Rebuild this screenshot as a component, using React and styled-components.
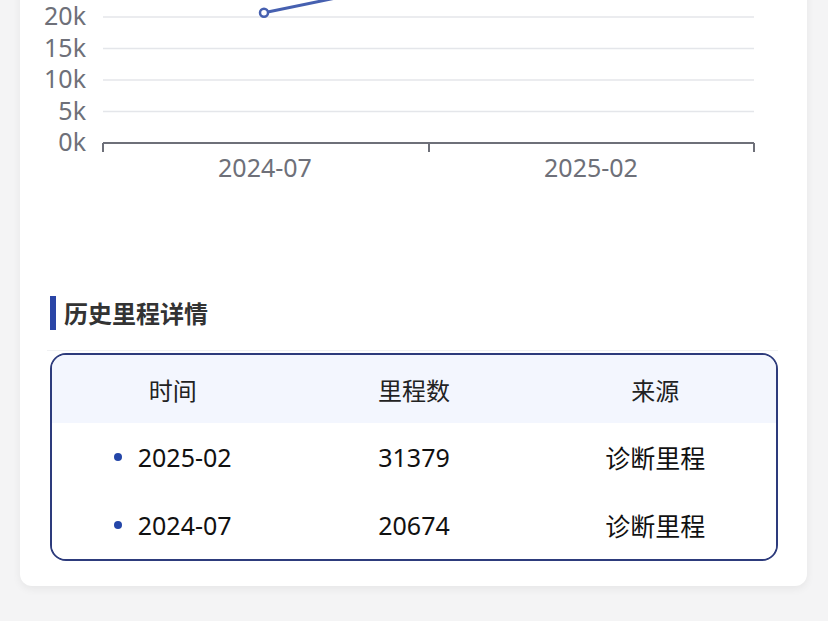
import React from "react";
import styled, { createGlobalStyle } from "styled-components";

const Global = createGlobalStyle`
  html, body { margin: 0; padding: 0; background: #f4f4f5; overflow: hidden; }
  body { font-family: "Noto Sans", "Noto Sans CJK SC", sans-serif; }
`;

const Page = styled.div`
  width: 828px;
  height: 621px;
  background: #f4f4f5;
  box-sizing: border-box;
  padding: 0 21px 0 20px;
`;

const Card = styled.div`
  margin-top: -20px;
  padding: 20px 0 25px;
  background: #fff;
  border-radius: 12px;
  box-shadow: 0 3px 8px rgba(0, 0, 0, 0.06);
`;

const ChartSvg = styled.svg`
  display: block;
  width: 787px;
  height: 270px;
  overflow: hidden;
`;

const Section = styled.div`
  padding: 0 29px 0 30px;
`;

const TitleRow = styled.div`
  margin-top: 26px;
  display: flex;
  align-items: center;
  gap: 8px;
  padding-bottom: 20px;
  border-bottom: 1px solid #f0f1f3;
  margin-left: -3px;
  padding-left: 3px;
`;

const TitleBar = styled.span`
  width: 6px;
  height: 34px;
  background: #2a45a6;
`;

const TitleText = styled.h2`
  margin: 0;
  font-size: 24px;
  line-height: 34px;
  font-weight: 700;
  color: #333;
  font-family: "Noto Sans CJK SC", sans-serif;
`;

const Table = styled.div`
  margin-top: 2px;
  border: 2px solid #2d3b7c;
  border-radius: 16px;
  overflow: hidden;
`;

const Row = styled.div`
  display: grid;
  grid-template-columns: 1fr 1fr 1fr;
  align-items: center;
  height: 68px;
  background: ${(p) => (p.$head ? "#f3f6fe" : "#fff")};
`;

const Cell = styled.div`
  display: flex;
  align-items: center;
  justify-content: center;
  gap: 16px;
  font-size: ${(p) => (p.$head ? 24 : 25)}px;
  color: ${(p) => (p.$head ? "#222" : "#111")};
  font-family: "Noto Sans", "Noto Sans CJK SC", sans-serif;
`;

const Dot = styled.span`
  width: 8px;
  height: 8px;
  border-radius: 50%;
  background: #2446a8;
`;

const AXIS = "#6e7079";
const GRID = "#e4e6ea";
const yTicks = [
  { label: "20k", y: 17 },
  { label: "15k", y: 48.5 },
  { label: "10k", y: 80 },
  { label: "5k", y: 111.5 },
  { label: "0k", y: 143 },
];

function Chart() {
  const yOf = (v) => 143 - (v / 5000) * 31.5;
  const p1 = { x: 244, y: yOf(20674) };
  const p2 = { x: 572, y: yOf(31379) };
  return (
    <ChartSvg viewBox="0 0 787 270">
      {yTicks.slice(0, 4).map((t) => (
        <line key={t.label} x1="83" x2="734" y1={t.y} y2={t.y} stroke={GRID} strokeWidth="1.5" />
      ))}
      {yTicks.map((t) => (
        <text
          key={"l" + t.label}
          x="66"
          y={t.y - 2}
          textAnchor="end"
          dominantBaseline="central"
          fontSize="25"
          fill={AXIS}
          fontFamily="Noto Sans, sans-serif"
        >
          {t.label}
        </text>
      ))}
      <line x1="83" x2="734" y1="143" y2="143" stroke={AXIS} strokeWidth="2" />
      {[83, 409, 734].map((x) => (
        <line key={x} x1={x} x2={x} y1="143" y2="152" stroke={AXIS} strokeWidth="2" />
      ))}
      {[
        { x: 245, l: "2024-07" },
        { x: 571, l: "2025-02" },
      ].map((c) => (
        <text
          key={c.l}
          x={c.x}
          y="167"
          textAnchor="middle"
          dominantBaseline="central"
          fontSize="25"
          fill={AXIS}
          fontFamily="Noto Sans, sans-serif"
        >
          {c.l}
        </text>
      ))}
      <line x1={p1.x} y1={p1.y} x2={p2.x} y2={p2.y} stroke="#4660b0" strokeWidth="3" />
      <circle cx={p1.x} cy={p1.y} r="4" fill="#fff" stroke="#4660b0" strokeWidth="2.5" />
    </ChartSvg>
  );
}

const rows = [
  { date: "2025-02", km: "31379", src: "诊断里程" },
  { date: "2024-07", km: "20674", src: "诊断里程" },
];

export default function App() {
  return (
    <Page>
      <Global />
      <Card>
        <Chart />
        <Section>
          <TitleRow>
            <TitleBar />
            <TitleText>历史里程详情</TitleText>
          </TitleRow>
          <Table>
            <Row $head>
              <Cell $head>时间</Cell>
              <Cell $head>里程数</Cell>
              <Cell $head>来源</Cell>
            </Row>
            {rows.map((r) => (
              <Row key={r.date}>
                <Cell>
                  <Dot />
                  {r.date}
                </Cell>
                <Cell>{r.km}</Cell>
                <Cell>{r.src}</Cell>
              </Row>
            ))}
          </Table>
        </Section>
      </Card>
    </Page>
  );
}
